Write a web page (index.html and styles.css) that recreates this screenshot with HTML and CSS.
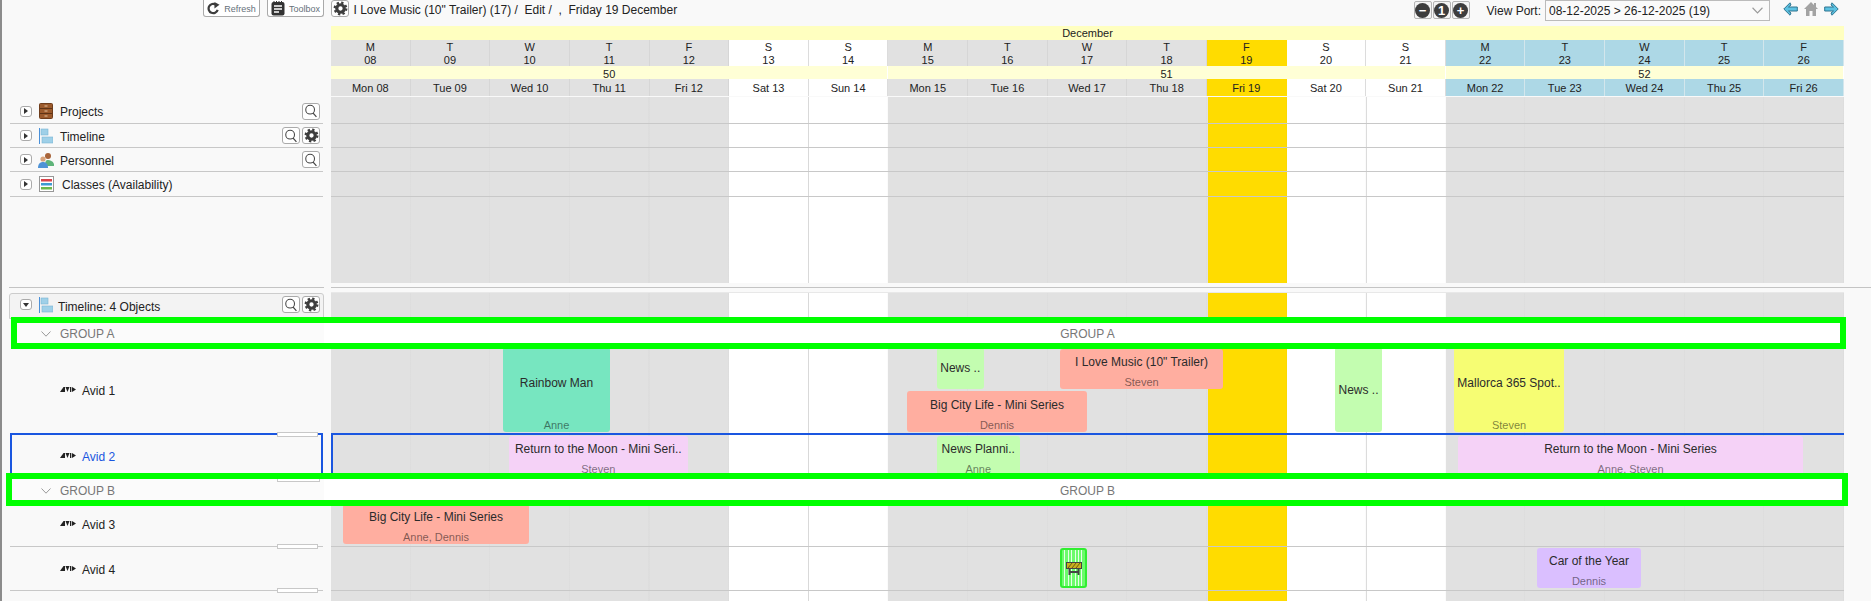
FILE: index.html
```html
<!DOCTYPE html>
<html lang="en">
<head>
  <meta charset="UTF-8" />
  <title>Timeline | I Love Music</title>
  <link rel="stylesheet" href="styles.css">
</head>
<body>
  <svg class="defs" width="0" height="0">
    <symbol id="gear" viewBox="0 0 16 16">
      <circle cx="8" cy="8" r="4" fill="none" stroke="#3d3d3d" stroke-width="3.4"/>
      <circle cx="8" cy="8" r="6.2" fill="none" stroke="#3d3d3d" stroke-width="2.4" stroke-dasharray="2.43 2.44"/>
    </symbol>
    <symbol id="search" viewBox="0 0 16 16">
      <circle cx="7" cy="6.5" r="5" fill="none" stroke="#444" stroke-width="1.2"/>
      <path d="M10.4 10.4l3.8 4.4" stroke="#444" stroke-width="1.4" fill="none"/>
    </symbol>
    <symbol id="bars" viewBox="0 0 14 16">
      <rect x="0" y="0" width="1" height="16" fill="#4a90d9"/>
      <rect x="2" y="1" width="7" height="6" fill="#9fd0e8" stroke="#7ab4d4" stroke-width=".6"/>
      <rect x="3" y="9" width="11" height="6" fill="#9fd0e8" stroke="#7ab4d4" stroke-width=".6"/>
    </symbol>
    <symbol id="avid" viewBox="0 0 16 5">
      <polygon points="0,5 3.500,0 5,0 5,5" fill="#222"/>
      <polygon points="5.500,0 9.500,0 7.500,5" fill="#222"/>
      <rect x="10" y="0" width="1.300" height="5" fill="#222"/>
      <polygon points="12,0 16,2.500 12,5" fill="#222"/>
    </symbol>
    <symbol id="chevron" viewBox="0 0 10 6">
      <path d="M.5.5L5 5.2 9.5.5" fill="none" stroke="#999" stroke-width="1"/>
    </symbol>
  </svg>

  <header class="topbar">
    <div class="top-tools">
      <span class="tool-btn">
        <svg width="13" height="13" viewBox="0 0 14 14"><path d="M11.5 8.5A5 5 0 1 1 9.5 2.8" fill="none" stroke="#3d3d3d" stroke-width="2.4"/><polygon points="8,0 13.500,3 8,7" fill="#3d3d3d"/></svg>
        Refresh
      </span>
      <span class="tool-btn">
        <svg width="14" height="15" viewBox="0 0 14 15"><rect x="0.500" y="1" width="13" height="13.500" rx="2" fill="#333"/><path d="M3 0v2.500M5.500 0v2.500M8 0v2.500M10.500 0v2.500" stroke="#333"/><path d="M3 5h8M3 8h8M3 11h5" stroke="#fff" stroke-width="1.3"/></svg>
        Toolbox
      </span>
    </div>
    <span class="icon-btn"><svg width="15" height="15"><use href="#gear"/></svg></span>
    <span class="doc-title">I Love Music (10" Trailer) (17) /&nbsp; Edit / &nbsp;, &nbsp;Friday 19 December</span>
    <div class="viewport">
      <span class="zoom-btn"><b>&minus;</b></span>
      <span class="zoom-btn"><b>1</b></span>
      <span class="zoom-btn"><b>+</b></span>
      <span class="viewport-label">View Port:</span>
      <div class="viewport-select">
        08-12-2025 &gt; 26-12-2025 (19)
        <svg width="11" height="7"><use href="#chevron"/></svg>
      </div>
      <div class="nav-icons">
        <svg width="15" height="14" viewBox="0 0 15 14"><polygon points="7,.8 .8,7 7,13.200 8,11 5.500,9 14.300,9 14.300,5 5.500,5 8,3" fill="#5cc2e2" stroke="#2f7590"/></svg>
        <svg width="14" height="14" viewBox="0 0 14 14"><path d="M7 0l3 3V1h2v4l2 2h-2v7H8.500V9h-3v5H2V7H0z" fill="#a3a3a3"/></svg>
        <svg width="15" height="14" viewBox="0 0 15 14"><polygon points="8,.8 14.200,7 8,13.200 7,11 9.500,9 .7,9 .7,5 9.500,5 7,3" fill="#5cc2e2" stroke="#2f7590"/></svg>
      </div>
    </div>
  </header>

  <div class="row">
    <div class="side"></div>
    <div class="calendar">
      <div class="month">December</div>
      <div class="days">
        <div>M<br>08</div><div>T<br>09</div><div>W<br>10</div><div>T<br>11</div><div>F<br>12</div>
        <div class="off">S<br>13</div><div class="off">S<br>14</div>
        <div>M<br>15</div><div>T<br>16</div><div>W<br>17</div><div>T<br>18</div>
        <div class="today">F<br>19</div>
        <div class="off">S<br>20</div><div class="off">S<br>21</div>
        <div class="next">M<br>22</div><div class="next">T<br>23</div><div class="next">W<br>24</div><div class="next">T<br>25</div><div class="next">F<br>26</div>
      </div>
      <div class="weeks">
        <div class="wk7">50</div>
        <div class="wk7">51</div>
        <div class="wk5">52</div>
      </div>
      <div class="labels">
        <div>Mon 08</div><div>Tue 09</div><div>Wed 10</div><div>Thu 11</div><div>Fri 12</div>
        <div class="off">Sat 13</div><div class="off">Sun 14</div>
        <div>Mon 15</div><div>Tue 16</div><div>Wed 17</div><div>Thu 18</div>
        <div class="today">Fri 19</div>
        <div class="off">Sat 20</div><div class="off">Sun 21</div>
        <div class="next">Mon 22</div><div class="next">Tue 23</div><div class="next">Wed 24</div><div class="next">Thu 25</div><div class="next">Fri 26</div>
      </div>
    </div>
  </div>

  <!-- tree -->
  <div class="row tree-first">
    <div class="side">
      <div class="side-row">
        <span class="disclosure"><i class="tri-right"></i></span>
        <svg class="item-icon" width="14" height="16" viewBox="0 0 14 16">
          <rect x="0.500" y="0.500" width="13" height="15" rx="1" fill="#9c5a2c" stroke="#6e3d1c"/>
          <path d="M1 5.500h12M1 10.500h12" stroke="#5f3416"/>
          <path d="M5.500 3h3M5.500 8h3M5.500 13h3" stroke="#e3c4a0"/>
        </svg>
        <span class="item-name">Projects</span>
        <div class="actions"><span class="icon-btn"><svg width="14" height="14"><use href="#search"/></svg></span></div>
      </div>
    </div>
    <div class="track lined"></div>
  </div>
  <div class="row tree">
    <div class="side">
      <div class="side-row">
        <span class="disclosure"><i class="tri-right"></i></span>
        <svg class="item-icon" width="14" height="16"><use href="#bars"/></svg>
        <span class="item-name">Timeline</span>
        <div class="actions">
          <span class="icon-btn"><svg width="14" height="14"><use href="#search"/></svg></span>
          <span class="icon-btn"><svg width="15" height="15"><use href="#gear"/></svg></span>
        </div>
      </div>
    </div>
    <div class="track lined"></div>
  </div>
  <div class="row tree">
    <div class="side">
      <div class="side-row">
        <span class="disclosure"><i class="tri-right"></i></span>
        <svg class="item-icon icon-people" width="16" height="16" viewBox="0 0 16 16">
          <circle cx="10" cy="4" r="3" fill="#a8643a"/>
          <path d="M7 14c0-5 1-6 3-6s5 1 6 4v2z" fill="#5fb47a"/>
          <circle cx="5" cy="7" r="2.600" fill="#d9a47c"/>
          <path d="M0 16c0-4 2-6 5-6s5 2 5 6z" fill="#4f93d6"/>
        </svg>
        <span class="item-name name-people">Personnel</span>
        <div class="actions"><span class="icon-btn"><svg width="14" height="14"><use href="#search"/></svg></span></div>
      </div>
    </div>
    <div class="track lined"></div>
  </div>
  <div class="row tree tree-last">
    <div class="side">
      <div class="side-row">
        <span class="disclosure"><i class="tri-right"></i></span>
        <svg class="item-icon" width="15" height="16" viewBox="0 0 15 16">
          <rect x="0.500" y="0.500" width="14" height="15" fill="#fff" stroke="#333" stroke-dasharray="1 1"/>
          <rect x="2" y="3" width="11" height="2.500" fill="#d9424a"/>
          <rect x="2" y="7" width="11" height="2.500" fill="#3d9ad1"/>
          <rect x="2" y="11" width="11" height="2.500" fill="#6cb84a"/>
        </svg>
        <span class="item-name classes-name">Classes (Availability)</span>
      </div>
    </div>
    <div class="track lined"></div>
  </div>
  <div class="row tree-empty">
    <div class="side"></div>
    <div class="track"></div>
  </div>

  <div class="split">
    <span class="split-left"></span>
    <span class="split-right"></span>
  </div>

  <!-- timeline -->
  <div class="row head-row">
    <div class="side">
      <div class="head-panel">
        <span class="disclosure"><i class="tri-down"></i></span>
        <svg class="item-icon" width="14" height="16"><use href="#bars"/></svg>
        <span class="item-name">Timeline: 4 Objects</span>
        <div class="actions">
          <span class="icon-btn"><svg width="14" height="14"><use href="#search"/></svg></span>
          <span class="icon-btn"><svg width="15" height="15"><use href="#gear"/></svg></span>
        </div>
      </div>
    </div>
    <div class="track"></div>
  </div>

  <div class="group group-a">
    <div class="group-side"><svg width="10" height="6"><use href="#chevron"/></svg>GROUP A</div>
    <div class="group-title">GROUP A</div>
  </div>

  <div class="row avid1">
    <div class="side">
      <div class="side-row res-row">
        <svg class="avid-logo" width="16" height="5"><use href="#avid"/></svg>
        <span class="item-name">Avid 1</span>
        <span class="handle"></span>
      </div>
    </div>
    <div class="track">
      <div class="ev teal" style="left:172px;top:4px;width:107px;height:85px"><span class="ev-title">Rainbow Man</span><span class="ev-sub">Anne</span></div>
      <div class="ev green" style="left:606px;top:4px;width:46.5px;height:42px"><span class="ev-title">News ..</span></div>
      <div class="ev salmon" style="left:729px;top:6px;width:163px;height:40px"><span class="ev-title">I Love Music (10" Trailer)</span><span class="ev-sub">Steven</span></div>
      <div class="ev salmon" style="left:576px;top:48px;width:180px;height:41px"><span class="ev-title">Big City Life - Mini Series</span><span class="ev-sub">Dennis</span></div>
      <div class="ev green" style="left:1004px;top:4px;width:47px;height:85px"><span class="ev-title">News ..</span></div>
      <div class="ev yellow" style="left:1123px;top:4px;width:110px;height:85px"><span class="ev-title">Mallorca 365 Spot..</span><span class="ev-sub">Steven</span></div>
    </div>
  </div>

  <div class="row avid2">
    <div class="side">
      <div class="side-row res-row selected">
        <svg class="avid-logo" width="16" height="5"><use href="#avid"/></svg>
        <span class="item-name">Avid 2</span>
      </div>
    </div>
    <div class="track selected">
      <div class="ev pink" style="left:177.5px;top:3px;width:179.5px;height:40px"><span class="ev-title">Return to the Moon - Mini Seri..</span><span class="ev-sub">Steven</span></div>
      <div class="ev green" style="left:606px;top:3px;width:82.5px;height:40px"><span class="ev-title">News Planni..</span><span class="ev-sub">Anne</span></div>
      <div class="ev pink" style="left:1127px;top:3px;width:345px;height:40px"><span class="ev-title">Return to the Moon - Mini Series</span><span class="ev-sub">Anne, Steven</span></div>
    </div>
  </div>

  <div class="group group-b">
    <div class="group-side"><svg width="10" height="6"><use href="#chevron"/></svg>GROUP B</div>
    <div class="group-title">GROUP B</div>
  </div>

  <div class="row avid3">
    <div class="side">
      <div class="side-row res-row">
        <svg class="avid-logo" width="16" height="5"><use href="#avid"/></svg>
        <span class="item-name">Avid 3</span>
        <span class="handle"></span>
      </div>
    </div>
    <div class="track lined">
      <div class="ev salmon" style="left:12px;top:4px;width:186px;height:40px"><span class="ev-title">Big City Life - Mini Series</span><span class="ev-sub">Anne, Dennis</span></div>
    </div>
  </div>

  <div class="row avid4">
    <div class="side">
      <div class="side-row res-row">
        <svg class="avid-logo" width="16" height="5"><use href="#avid"/></svg>
        <span class="item-name">Avid 4</span>
        <span class="handle"></span>
      </div>
    </div>
    <div class="track lined">
      <div class="task" style="left:729px;top:1px">
        <svg width="16" height="13" viewBox="0 0 16 13">
          <path d="M3.500 6v7M12.500 6v7M3.500 10h9" stroke="#444" stroke-width="2" fill="none"/>
          <rect x="0.500" y="0.500" width="15" height="6" fill="#c9b020" stroke="#444"/>
          <path d="M2 6l4-5M6 6l4-5M10 6l4-5" stroke="#6b5a10" stroke-width="1"/>
        </svg>
      </div>
      <div class="ev purple" style="left:1206px;top:1px;width:104px;height:40px"><span class="ev-title">Car of the Year</span><span class="ev-sub">Dennis</span></div>
    </div>
  </div>

  <div class="row tail">
    <div class="side"></div>
    <div class="track"></div>
  </div>
</body>
</html>
```

FILE: styles.css
```css
* { box-sizing: border-box; }

body {
  margin: 0;
  height: 601px;
  overflow: hidden;
  font-family: 'Liberation Sans', Arial, sans-serif;
  font-size: 12px;
  color: #222;
  background: linear-gradient(90deg, #8c8c8c 0 2px, #f9f9f9 2px);
}

.defs { position: absolute; }

/* top bar */
.topbar {
  display: flex;
  align-items: flex-start;
  height: 26px;
}

.top-tools {
  display: flex;
  justify-content: flex-end;
  gap: 7px;
  width: 331px;
  padding-right: 7px;
}

.tool-btn {
  display: flex;
  align-items: center;
  justify-content: center;
  gap: 4px;
  width: 57px;
  height: 17px;
  padding-top: 1px;
  font-size: 9px;
  color: #66707a;
  background: #fff;
  border: 1px solid #aaa;
  border-top: 0;
  border-radius: 0 0 3px 3px;
}

.icon-btn {
  display: flex;
  align-items: center;
  justify-content: center;
  width: 18px;
  height: 17px;
  background: #fff;
  border: 1px solid #aaa;
  border-radius: 3px;
}

.doc-title {
  margin-left: 4.5px;
  line-height: 20px;
}

.viewport {
  display: flex;
  align-items: flex-start;
  margin-left: auto;
  padding-right: 32px;
}

.zoom-btn {
  display: flex;
  align-items: center;
  justify-content: center;
  width: 18px;
  height: 18px;
  margin: 1px 1px 0 0;
  background: #f4f4f4;
  border: 1px solid #b5b5b5;
  border-radius: 2px;
}

.zoom-btn b {
  width: 15px;
  height: 15px;
  border-radius: 50%;
  background: #3d3d3d;
  color: #fff;
  font-size: 13px;
  line-height: 15px;
  text-align: center;
}

.viewport-label {
  margin-left: 16px;
  line-height: 22px;
}

.viewport-select {
  display: flex;
  align-items: center;
  justify-content: space-between;
  width: 225px;
  height: 21px;
  margin-left: 4px;
  padding: 0 6px 0 3px;
  background: #fafafa;
  border: 1px solid #bbb;
}

.nav-icons {
  display: flex;
  gap: 6px;
  margin: 2px 0 0 13px;
}

/* rows */
.row { display: flex; }

.side {
  flex: none;
  width: 331px;
}

.track {
  position: relative;
  flex: none;
  width: 1513px;
  background:
    repeating-linear-gradient(90deg, transparent 0 78.6px, rgba(0, 0, 0, 0.015) 78.6px 79.63px),
    linear-gradient(90deg,
      #e1e1e1 0 398px,
      #fff 398px 477px, #dcdcdc 477px 478px, #fff 478px 557px,
      #e1e1e1 557px 877px,
      #ffdc00 877px 956px,
      #fff 956px 1035px, #dcdcdc 1035px 1036px, #fff 1036px 1115px,
      #e1e1e1 1115px);
}

.track.lined { border-bottom: 1px solid #c8c8c8; }

/* calendar head */
.calendar {
  flex: none;
  width: 1513px;
  height: 71px;
  font-size: 11px;
  text-align: center;
}

.month {
  height: 14px;
  line-height: 14px;
  background: #ffffc0;
}

.days, .labels {
  display: grid;
  grid-template-columns: repeat(19, 1fr);
}

.days > div, .labels > div {
  background: #e1e1e1;
  border-right: 1px solid #d6d6d6;
}

.days > div {
  height: 26px;
  padding-top: 1px;
  line-height: 13px;
}

.labels > div {
  height: 17px;
  padding-top: 1px;
  line-height: 17px;
}

.days > .off, .labels > .off { background: #fff; border-right-color: #dcdcdc; }
.days > .today, .labels > .today { background: #ffdc00; border-right-color: #ffdc00; }
.days > .next, .labels > .next { background: #add8e6; border-right-color: #d3e6ec; }

.weeks {
  display: grid;
  grid-template-columns: 7fr 7fr 5fr;
  height: 13px;
  background: #ffffd6;
}

.weeks > div {
  line-height: 17px;
  overflow: hidden;
  border-right: 1px solid #fff;
}

/* tree on the left */
.side-row {
  position: relative;
  display: flex;
  align-items: center;
  width: 313px;
  height: 100%;
  margin-left: 10px;
  padding: 0 3px 0 10px;
  border-bottom: 1px solid #c8c8c8;
}

.tree-first { height: 27px; }
.tree-first .side-row { padding-top: 2px; }
.tree { height: 24px; }
.tree-last { height: 25px; }
.tree-empty { height: 86px; }

.disclosure {
  display: flex;
  align-items: center;
  justify-content: center;
  flex: none;
  width: 12px;
  height: 11px;
  background: #fff;
  border: 1px solid #aaa;
  border-radius: 3px;
}

.tri-right {
  border-left: 4px solid #333;
  border-top: 3px solid transparent;
  border-bottom: 3px solid transparent;
}

.tri-down {
  border-top: 4px solid #333;
  border-left: 3px solid transparent;
  border-right: 3px solid transparent;
}

.item-icon {
  flex: none;
  margin-left: 7px;
}

.item-name {
  margin-left: 7px;
  padding-top: 2px;
}

.icon-people { margin-left: 6px; }
.name-people { margin-left: 6px; }
.classes-name { margin-left: 8px; }

.actions {
  display: flex;
  gap: 2px;
  margin-left: auto;
}

/* divider between tree and timeline */
.split {
  display: flex;
  height: 9px;
}

.split-left, .split-right {
  height: 1px;
  margin-top: 4px;
  background: #c4c4c4;
}

.split-left { width: 315px; margin-left: 9px; }
.split-right { flex: 1; margin-left: 7px; }

/* timeline head */
.head-row { height: 31px; }

.head-row .track { border-top: 1px solid #e8e8e8; }

.head-panel {
  display: flex;
  align-items: center;
  width: 315px;
  height: 26px;
  margin: 1px 0 0 9px;
  padding: 0 3px 3px 10px;
  background: #f3f3f3;
  border: 1px solid #ccc;
  border-radius: 3px 3px 0 0;
}

.head-panel .item-name {
  margin-left: 5px;
  padding-top: 4px;
}

/* green framed groups */
.group {
  position: relative;
  z-index: 2;
  display: flex;
  align-items: center;
  margin-left: var(--offset);
  width: calc(1840px - var(--offset));
  padding-top: 2px;
  color: #777;
  background: linear-gradient(90deg, #fbfbfb 0 calc(324px - var(--offset)), #fff 0);
  outline: 6px solid #00ff00;
}

.group-a { --offset: 17px; height: 20px; }
.group-b { --offset: 12px; height: 21px; width: 1830px; }

.group-b::before {
  content: "";
  position: absolute;
  top: 0;
  left: 265px;
  width: 41px;
  height: 2px;
  background: #fff;
  border: 1px solid #c8c8c8;
  border-top: 0;
}

.group-side {
  display: flex;
  align-items: center;
  gap: 9px;
  flex: none;
  width: calc(331px - var(--offset));
  padding-left: calc(41px - var(--offset));
}

.group-title {
  flex: none;
  width: 1513px;
  text-align: center;
}

/* resources */
.avid1 { height: 90px; }
.avid2 { height: 46px; }
.avid3 { height: 47px; }
.avid4 { height: 44px; }
.tail { height: 10px; }

.res-row { padding-left: 50px; }
.res-row .item-name { margin-left: 6px; }

.avid-logo { flex: none; margin-top: -1px; }

.avid1 .side-row { border-bottom: 0; padding-top: 4px; }
.avid2 .side-row { border-bottom: 0; }
.avid3 .side-row { padding-top: 2px; }

.selected { box-shadow: inset 2px 2px 0 #1a56e0; }
.side-row.selected { box-shadow: inset 2px 2px 0 #1a56e0, inset -2px 0 0 #1a56e0; }
.side-row.selected .item-name { color: #1a56e0; }

.handle {
  position: absolute;
  z-index: 1;
  left: 267px;
  bottom: -3px;
  width: 41px;
  height: 5px;
  background: #fff;
  border: 1px solid #c8c8c8;
}

.avid1 .handle { bottom: -4px; }

/* bars */
.ev {
  position: absolute;
  display: flex;
  flex-direction: column;
  align-items: center;
  overflow: hidden;
  white-space: nowrap;
  border-radius: 3px;
}

.ev-title {
  display: flex;
  align-items: center;
  flex: 1;
  color: #2b2b2b;
}

.ev-sub {
  flex: none;
  height: 14px;
  line-height: 14px;
  font-size: 11px;
  color: rgba(0, 0, 0, 0.5);
}

.teal { background: #77e6c0; }
.green { background: #c3fdb0; }
.salmon { background: #ffaea0; }
.yellow { background: #f6fd73; }
.pink { background: #f5d2f7; }
.purple { background: #dabfff; }

.task {
  position: absolute;
  display: flex;
  align-items: center;
  justify-content: center;
  width: 27px;
  height: 40px;
  border: 2px solid #30ee30;
  border-radius: 3px;
  background: repeating-linear-gradient(90deg, #6cfb6c 0 2.4px, #e6ffe6 2.4px 3.4px);
}
```
